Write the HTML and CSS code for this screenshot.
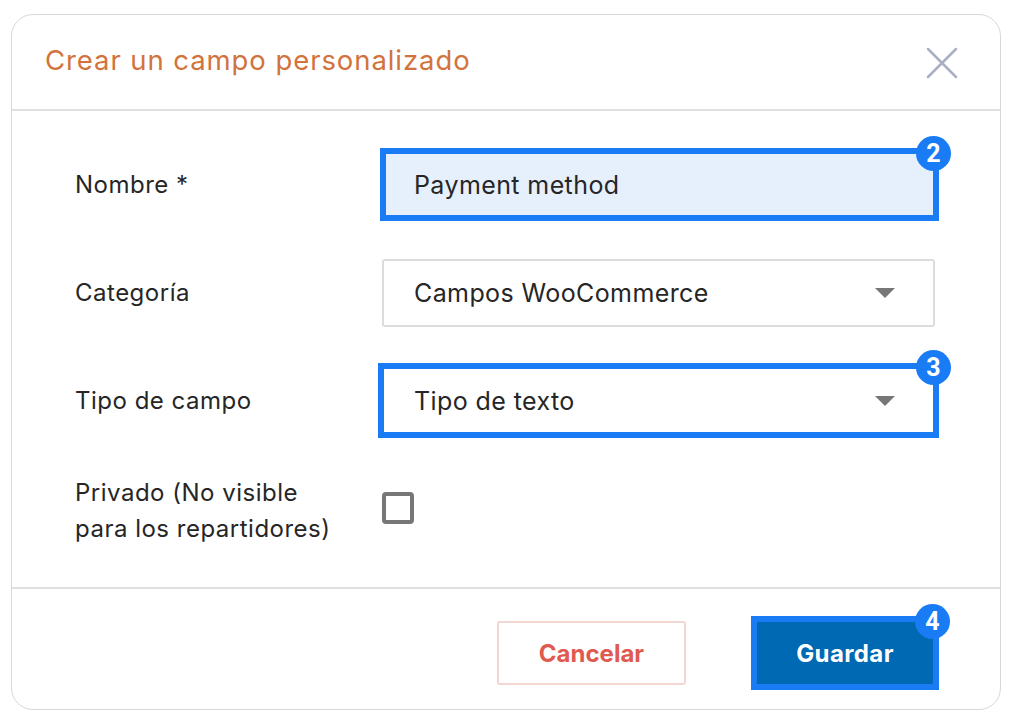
FILE: index.html
```html
<!DOCTYPE html>
<html lang="es">
<head>
    <meta charset="UTF-8">
    <title>Crear un campo personalizado</title>
    <link rel="stylesheet" href="styles.css">
</head>
<body>
    <div class="dialog">
        <header class="dialog-header">
            <h1>Crear un campo personalizado</h1>
            <svg class="close" viewBox="0 0 32 32" width="32" height="32" aria-label="Cerrar">
                <path d="M2 2 L30 30 M30 2 L2 30"/>
            </svg>
        </header>

        <div class="dialog-body">
            <div class="row">
                <label>Nombre *</label>
                <div class="field filled">
                    Payment method
                    <span class="mark mark-name"><span class="badge">2</span></span>
                </div>
            </div>
            <div class="row">
                <label>Categoría</label>
                <div class="field">
                    Campos WooCommerce
                    <span class="arrow"></span>
                </div>
            </div>
            <div class="row">
                <label>Tipo de campo</label>
                <div class="field plain">
                    Tipo de texto
                    <span class="arrow"></span>
                    <span class="mark mark-type"><span class="badge">3</span></span>
                </div>
            </div>
            <div class="row">
                <label>Privado (No visible<br>para los repartidores)</label>
                <span class="checkbox"></span>
            </div>
        </div>

        <footer class="dialog-footer">
            <button class="btn btn-cancel">Cancelar</button>
            <button class="btn btn-save">
                Guardar
                <span class="mark mark-save"><span class="badge">4</span></span>
            </button>
        </footer>
    </div>
</body>
</html>
```

FILE: styles.css
```css
body {
    margin: 0;
    padding: 14px 11px;
    background-color: #fff;
    font-family: Inter, "Open Sans", sans-serif;
    color: #262626;
}

.dialog {
    width: 990px;
    height: 696px;
    box-sizing: border-box;
    border: 1.5px solid #d8d8d8;
    border-radius: 22px;
    display: flex;
    flex-direction: column;
}

.dialog-header {
    height: 96px;
    flex: none;
    box-sizing: border-box;
    display: flex;
    align-items: center;
    justify-content: space-between;
    padding: 0 42px 4px 33px;
    border-bottom: 2px solid #e0e0e0;
}

h1 {
    margin: 0;
    font-size: 27.5px;
    font-weight: 400;
    letter-spacing: 0.92px;
    color: #d2733d;
}

.close {
    margin-top: 6px;
}

.close path {
    fill: none;
    stroke: #a9afc5;
    stroke-width: 2.5;
    stroke-linecap: round;
}

.dialog-body {
    flex: 1;
    padding: 40px 65px 0 63px;
    display: flex;
    flex-direction: column;
    gap: 40px;
}

.row {
    display: flex;
    align-items: center;
    min-height: 68px;
}

label {
    width: 307px;
    flex: none;
    font-size: 24px;
    line-height: 36px;
    letter-spacing: 0.5px;
}

.field {
    flex: 1;
    height: 68px;
    box-sizing: border-box;
    position: relative;
    display: flex;
    align-items: center;
    padding-left: 30px;
    border: 2px solid #dcdcdc;
    border-radius: 3px;
    font-size: 25px;
    letter-spacing: 0.4px;
}

.filled { background-color: #e6f0fd; }
.plain { border-color: transparent; }

.arrow {
    position: absolute;
    right: 38px;
    top: 27px;
    border-left: 10px solid transparent;
    border-right: 10px solid transparent;
    border-top: 10px solid #777;
}

.checkbox {
    width: 32px;
    height: 32px;
    box-sizing: border-box;
    margin-top: -6px;
    border: 4px solid #777;
    border-radius: 4px;
}

/* blue tutorial highlights drawn over the form */
.mark {
    position: absolute;
    border: 6px solid #1a7cf5;
    pointer-events: none;
}

.mark-name { top: -5px; left: -4px; right: -6px; bottom: -4px; }
.mark-type { top: -6px; left: -6px; right: -6px; bottom: -5px; }
.mark-save { top: -5px; left: -5px; right: -5px; bottom: -5px; }

.badge {
    position: absolute;
    top: -18px;
    right: -18px;
    width: 35px;
    height: 35px;
    border-radius: 50%;
    background-color: #1a7cf5;
    color: #fff;
    font-family: Roboto, sans-serif;
    font-size: 25px;
    font-weight: 700;
    line-height: 35px;
    letter-spacing: 0;
    text-align: center;
}

.mark-type .badge { top: -19px; }
.mark-save .badge { top: -18px; right: -17px; }

.dialog-footer {
    height: 122px;
    flex: none;
    box-sizing: border-box;
    display: flex;
    justify-content: flex-end;
    align-items: center;
    gap: 70px;
    padding: 8px 66px 0 0;
    border-top: 2px solid #e0e0e0;
}

.btn {
    position: relative;
    height: 64px;
    box-sizing: border-box;
    border-radius: 3px;
    font-family: inherit;
    font-size: 24px;
    font-weight: 700;
}

.btn-cancel {
    width: 189px;
    background-color: #fff;
    border: 2px solid #f3d6d2;
    color: #e05a50;
}

.btn-save {
    width: 178px;
    background-color: #0069b4;
    border: none;
    border-radius: 0;
    color: #fff;
    letter-spacing: 0.4px;
}
```
